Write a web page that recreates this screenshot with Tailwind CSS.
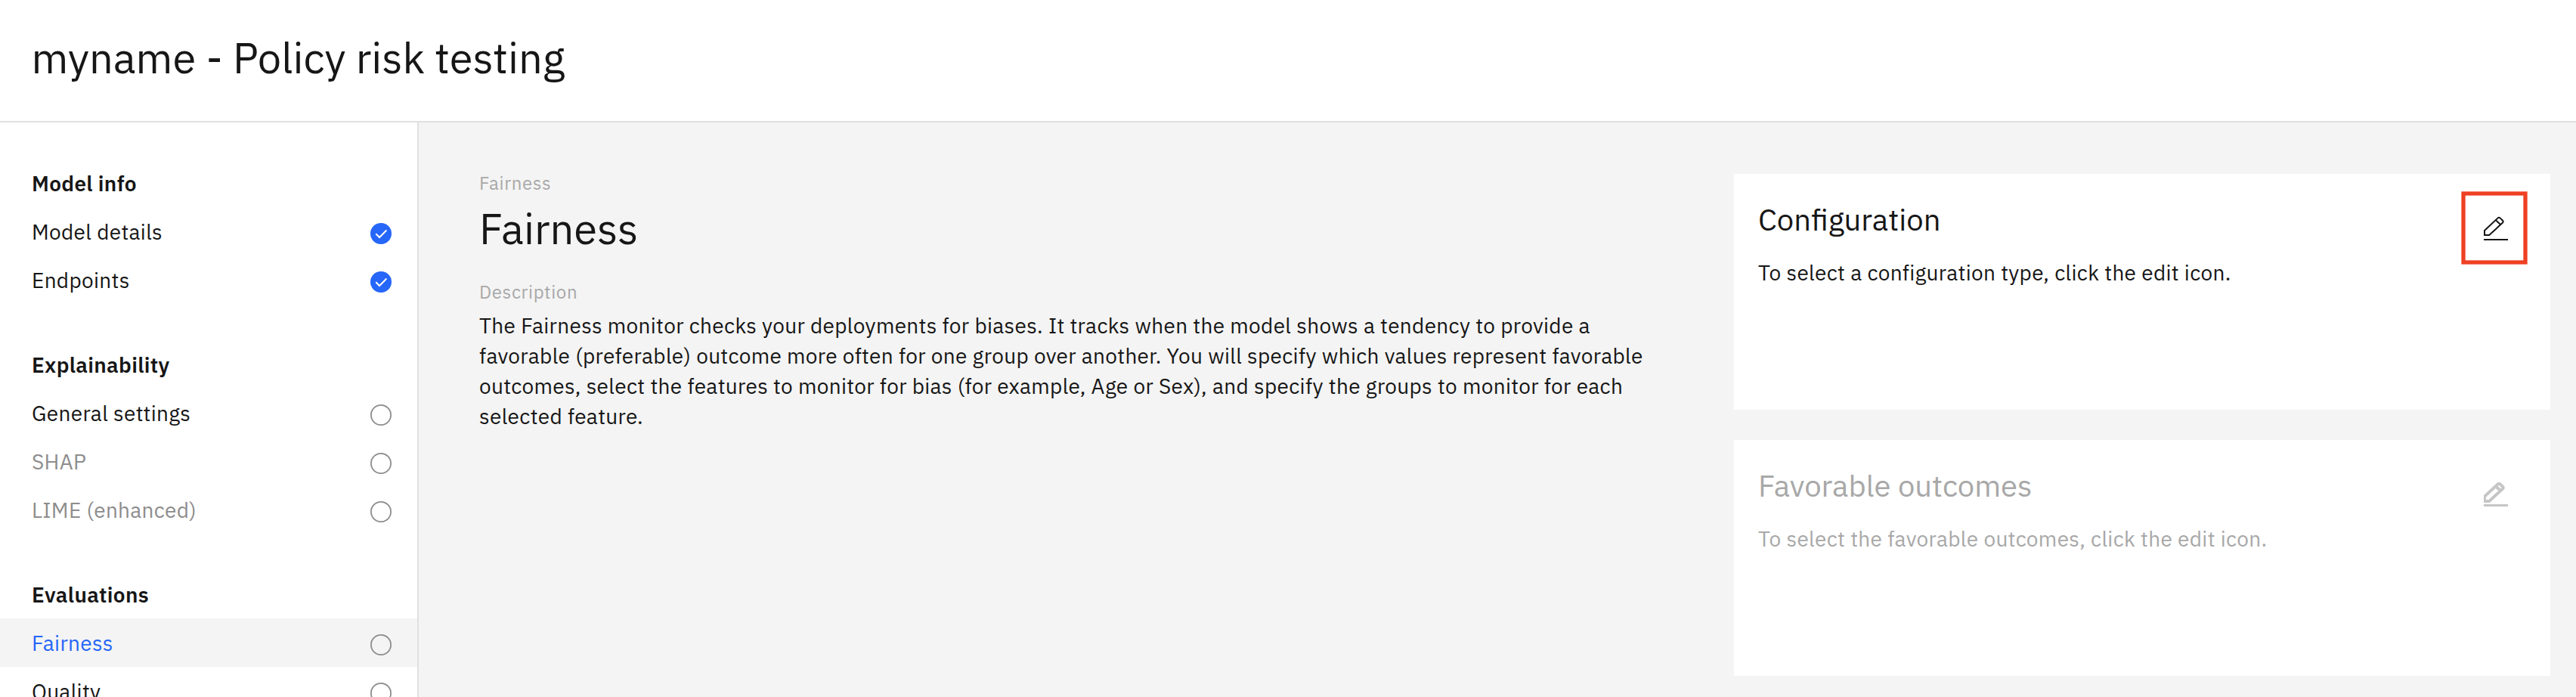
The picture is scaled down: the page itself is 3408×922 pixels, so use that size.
<!DOCTYPE html>
<html lang="en">
<head>
<meta charset="utf-8">
<title>myname - Policy risk testing</title>
<script src="https://cdn.jsdelivr.net/npm/@tailwindcss/browser@4"></script>
</head>
<body class="h-[922px] overflow-hidden bg-[#f4f4f4] font-['IBM_Plex_Sans',Roboto,'Liberation_Sans',sans-serif] text-[28px] leading-10 tracking-[0.32px] text-[#161616]">
<svg class="hidden">
  <symbol id="done" viewBox="0 0 28 28"><circle cx="14" cy="14" r="14" fill="#2666f8"/><path d="M7.3 14.3 12 19l9.3-9.4" fill="none" stroke="#fff" stroke-width="2.1"/></symbol>
  <symbol id="todo" viewBox="0 0 28 28"><circle cx="14" cy="14" r="13.1" fill="none" stroke="#8d8d8d" stroke-width="1.8"/></symbol>
  <symbol id="edit" viewBox="0 0 32 32"><path d="M1 25V18.9L18.6 2.4Q20 1 21.6 2.4L25 5.7Q26.3 7.1 25 8.6L7.2 25ZM15.7 5L22.3 11.3M0 31H32" fill="none" stroke="currentColor"/></symbol>
</svg>
<div class="flex h-[922px] flex-col">
  <header class="h-[162px] shrink-0 border-b-2 border-[#e0e0e0] bg-white px-[41.5px] pt-10">
    <h1 class="text-[56px] leading-[72px] tracking-normal">myname - Policy risk testing</h1>
  </header>
  <div class="flex min-h-0 flex-1">
    <nav class="flex w-[554px] shrink-0 flex-col gap-12 overflow-hidden border-r-2 border-[#e0e0e0] bg-white pt-12">
      <section>
        <h2 class="flex h-16 items-center px-[42px] pt-0.5 font-semibold">Model info</h2>
        <ul>
          <li class="flex h-16 items-center justify-between pt-0.5 pr-[34px] pl-[42px]">Model details<svg class="mt-1 size-7"><use href="#done"/></svg></li>
          <li class="flex h-16 items-center justify-between pt-0.5 pr-[34px] pl-[42px]">Endpoints<svg class="mt-1 size-7"><use href="#done"/></svg></li>
        </ul>
      </section>
      <section>
        <h2 class="flex h-16 items-center px-[42px] pt-0.5 font-semibold">Explainability</h2>
        <ul>
          <li class="flex h-16 items-center justify-between pt-0.5 pr-[34px] pl-[42px]">General settings<svg class="mt-1 size-7"><use href="#todo"/></svg></li>
          <li class="flex h-16 items-center justify-between pt-0.5 pr-[34px] pl-[42px] text-[#8d8d8d]">SHAP<svg class="mt-1 size-7"><use href="#todo"/></svg></li>
          <li class="flex h-16 items-center justify-between pt-0.5 pr-[34px] pl-[42px] text-[#8d8d8d]">LIME (enhanced)<svg class="mt-1 size-7"><use href="#todo"/></svg></li>
        </ul>
      </section>
      <section>
        <h2 class="flex h-16 items-center px-[42px] pt-0.5 font-semibold">Evaluations</h2>
        <ul>
          <li class="flex h-16 items-center justify-between bg-[#f4f4f4] pt-0.5 pr-[34px] pl-[42px] text-[#2666f8]">Fairness<svg class="mt-1 size-7"><use href="#todo"/></svg></li>
          <li class="flex h-16 items-center justify-between pt-0.5 pr-[34px] pl-[42px]">Quality<svg class="mt-1 size-7"><use href="#todo"/></svg></li>
        </ul>
      </section>
    </nav>
    <main class="flex flex-1 justify-between pr-[34px] pl-20">
      <article class="w-[1560px] pt-16">
        <p class="text-2xl leading-8 tracking-[0.64px] text-[#a8a8a8]">Fairness</p>
        <h2 class="mt-2 text-[56px] leading-[72px] tracking-normal">Fairness</h2>
        <p class="mt-8 text-2xl leading-8 tracking-[0.64px] text-[#a8a8a8]">Description</p>
        <p class="mt-[9px]">The Fairness monitor checks your deployments for biases. It tracks when the model shows a tendency to provide a favorable (preferable) outcome more often for one group over another. You will specify which values represent favorable outcomes, select the features to monitor for bias (for example, Age or Sex), and specify the groups to monitor for each selected feature.</p>
      </article>
      <aside class="flex w-[1080px] flex-col gap-10 pt-[68px]">
        <section class="relative flex h-[312px] justify-between bg-white pt-8 pr-14 pl-8">
          <div>
            <h3 class="text-[40px] leading-[56px] tracking-normal">Configuration</h3>
            <p class="mt-[23px]">To select a configuration type, click the edit icon.</p>
          </div>
          <svg class="mt-6 size-8" stroke-width="2"><use href="#edit"/></svg>
          <svg class="absolute top-[23px] left-[962px] h-[97px] w-[88px]" viewBox="0 0 88 97"><rect x="3" y="3" width="82" height="91" fill="none" stroke="#ee4023" stroke-width="5.3"/></svg>
        </section>
        <section class="flex h-[312px] justify-between bg-white pt-8 pr-14 pl-8 text-[#a8a8a8]">
          <div>
            <h3 class="text-[40px] leading-[56px] tracking-normal">Favorable outcomes</h3>
            <p class="mt-[23px]">To select the favorable outcomes, click the edit icon.</p>
          </div>
          <svg class="mt-6 size-8 text-[#c6c6c6]" stroke-width="4"><use href="#edit"/></svg>
        </section>
      </aside>
    </main>
  </div>
</div>
</body>
</html>
